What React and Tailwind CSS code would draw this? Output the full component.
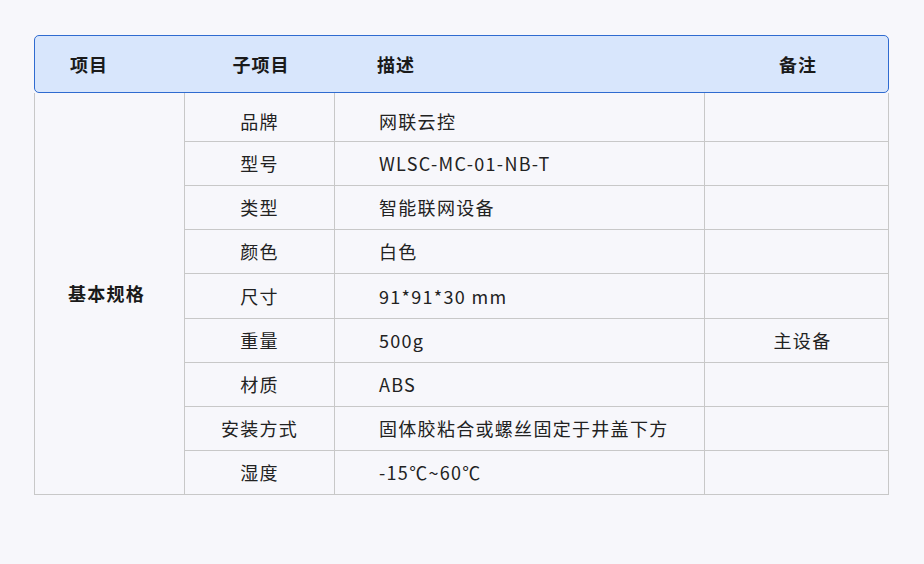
import React from 'react';

const rows = [
    { name: '品牌', desc: '网联云控', h: 'h-[49px] pt-[8px]' },
    { name: '型号', desc: 'WLSC-MC-01-NB-T', h: 'h-[44px]' },
    { name: '类型', desc: '智能联网设备', h: 'h-[44px]' },
    { name: '颜色', desc: '白色', h: 'h-[44px]' },
    { name: '尺寸', desc: '91*91*30 mm', h: 'h-[45px]' },
    { name: '重量', desc: '500g', note: '主设备', h: 'h-[44px]' },
    { name: '材质', desc: 'ABS', h: 'h-[44px]' },
    { name: '安装方式', desc: '固体胶粘合或螺丝固定于井盖下方', h: 'h-[44px]' },
    { name: '湿度', desc: '-15℃~60℃', h: 'h-[44px]' },
];

const App = () => {
    return (
        <div
            className="min-h-screen w-full bg-[#f7f7fb] text-[#222] pt-[35px] pl-[34px]"
            style={{ fontFamily: '"Noto Sans CJK SC", "Noto Sans", sans-serif' }}
        >
            <div className="w-[855px]">
                {/* Header */}
                <div className="h-[58px] grid grid-cols-[151px_150px_370px_184px] items-center bg-[#d8e6fc] border border-[#2f6bd0] rounded-[5px] text-[18px] font-bold tracking-[1px] text-[#1a1a1a]">
                    <div className="pl-[35px]">项目</div>
                    <div className="text-center">子项目</div>
                    <div className="pl-[41px]">描述</div>
                    <div className="text-center">备注</div>
                </div>

                {/* Body */}
                <div className="grid grid-cols-[151px_150px_370px_184px] text-[18px] tracking-[1.3px]">
                    <div className="row-span-9 border-l border-r border-b border-[#c8c8c8] flex items-center justify-center pr-[6px] font-bold text-[#1a1a1a]">
                        基本规格
                    </div>
                    {rows.map((r, i) => (
                        <React.Fragment key={i}>
                            <div className={`${r.h} border-r border-b border-[#c8c8c8] flex items-center justify-center`}>{r.name}</div>
                            <div className={`${r.h} border-r border-b border-[#c8c8c8] flex items-center pl-[44px]`}>{r.desc}</div>
                            <div className={`${r.h} border-r border-b border-[#c8c8c8] flex items-center justify-center pl-[12px]`}>{r.note || ''}</div>
                        </React.Fragment>
                    ))}
                </div>
            </div>
        </div>
    );
};

export default App;
